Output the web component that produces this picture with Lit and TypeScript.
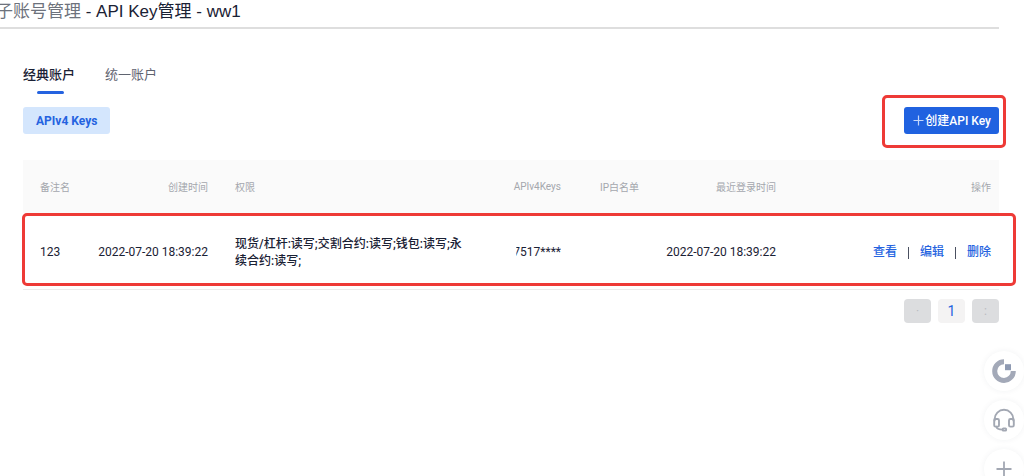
import { LitElement, html, css, svg } from "lit";
import { customElement, property } from "lit/decorators.js";

interface ApiKeyRow {
  name: string;
  created: string;
  permissions: string;
  key: string;
  ips: string;
  lastLogin: string;
}

@customElement("key-table")
class KeyTable extends LitElement {
  @property({ attribute: false }) rows: ApiKeyRow[] = [];

  static styles = css`
    :host { display: block; position: relative; }
    table { width: 100%; table-layout: fixed; border-collapse: collapse; }
    .c-name { width: 61px; }
    .c-created { width: 137px; }
    .c-key { width: 99px; }
    .c-ip { width: 78px; }
    .c-login { width: 137px; }
    .c-ops { width: 210px; }
    th, td { padding: 0 13px; text-align: right; white-space: nowrap; }
    th { height: 53px; background: #fafafa; color: #a4a7ad; font-size: 10px; font-weight: 400; }
    td { height: 73px; padding-top: 3px; font-size: 12px; line-height: 17px; color: #1a2134; border-bottom: 1px solid #ececec; }
    .name { text-align: left; padding-left: 17px; padding-right: 0; }
    .perm { text-align: left; white-space: normal; padding-left: 14px; }
    td.perm { font-weight: 500; }
    .ops { padding-left: 8px; padding-right: 8px; }
    .links { display: flex; justify-content: flex-end; align-items: center; gap: 11px; }
    a { color: #2563e0; text-decoration: none; font-weight: 500; }
    .bar { width: 1px; height: 12px; background: #4a5060; }
    .cut { display: inline-block; clip-path: inset(0 0 0 3px); }
    .frame { position: absolute; inset: 53px -17px 4px -1px; border: 3px solid #ee3a36; border-radius: 5px; pointer-events: none; }
  `;

  render() {
    return html`
      <table>
        <colgroup>
          <col class="c-name" /><col class="c-created" /><col /><col class="c-key" /><col class="c-ip" /><col class="c-login" /><col class="c-ops" />
        </colgroup>
        <thead>
          <tr>
            <th class="name">备注名</th><th>创建时间</th><th class="perm">权限</th><th>APIv4Keys</th><th>IP白名单</th><th>最近登录时间</th><th class="ops">操作</th>
          </tr>
        </thead>
        <tbody>
          ${this.rows.map((r) => html`
            <tr>
              <td class="name">${r.name}</td>
              <td>${r.created}</td>
              <td class="perm">${r.permissions}</td>
              <td><span class="cut">${r.key}</span></td>
              <td>${r.ips}</td>
              <td>${r.lastLogin}</td>
              <td class="ops">
                <div class="links">
                  <a href="#view">查看</a><span class="bar"></span><a href="#edit">编辑</a><span class="bar"></span><a href="#delete">删除</a>
                </div>
              </td>
            </tr>`)}
        </tbody>
      </table>
      <div class="frame"></div>
    `;
  }
}

const logoIcon = svg`
  <path d="M12 2.800A9.300 9.300 0 1 0 21.300 12" fill="none" stroke="#a3a9b8" stroke-width="5"/>
  <rect x="13" y="5.200" width="6" height="6" fill="#8e9ab2"/>`;

const headsetIcon = svg`
  <g fill="none" stroke="#a3a8b3" stroke-width="1.900" stroke-linecap="round" stroke-linejoin="round">
    <path d="M2.600 12.500V11.200a9.400 9.400 0 0 1 18.800 0V12.500"/>
    <rect x="2.200" y="11" width="4.800" height="7.600" rx="1.400"/>
    <rect x="17" y="11" width="4.800" height="7.600" rx="1.400"/>
    <path d="M4.400 18.600C4.800 21 7 21.600 10.500 21.600"/>
    <rect x="10.700" y="20.400" width="3.400" height="2.200" rx=".6"/>
  </g>`;

const plusIcon = svg`<path d="M12 4.500V19.500M4.500 12H19.500" fill="none" stroke="#a3a8b3" stroke-width="1.800"/>`;

@customElement("app-root")
class AppRoot extends LitElement {
  static styles = css`
    :host {
      display: block;
      min-height: 100vh;
      overflow: hidden;
      background: #fff;
      color: #1a2134;
      font-family: Roboto, "Noto Sans CJK SC", sans-serif;
    }
    * { box-sizing: border-box; }
    button { font: inherit; border: 0; padding: 0; cursor: pointer; }
    .page { padding-right: 25px; }
    h1 {
      margin: 0;
      height: 29px;
      margin-left: -4px;
      border-bottom: 2px solid #dedede;
      font: 400 17px/24px "Liberation Sans", "Noto Sans CJK SC", sans-serif;
      white-space: nowrap;
    }
    h1 a { color: #6d727c; text-decoration: none; }
    .content { padding-left: 23px; }
    .tabs { display: flex; gap: 30px; padding-top: 36px; }
    .tab { position: relative; height: 29px; background: none; font-size: 13px; line-height: 20px; padding-bottom: 9px; color: #5f6470; }
    .tab.on { color: #1a2134; font-weight: 500; }
    .tab.on::after { content: ""; position: absolute; left: 14px; right: 11px; bottom: 0; height: 3px; border-radius: 2px; background: #2563e0; }
    .tools { display: flex; justify-content: space-between; padding: 13px 0 26px; }
    .chip { height: 27px; padding: 0 13px; border-radius: 3px; background: #d4e6fd; color: #2563e0; font-size: 12px; font-weight: 700; }
    .create { position: relative; }
    .primary { display: flex; align-items: center; gap: 1px; height: 27px; padding: 0 8px 0 9px; border-radius: 3px; background: #2062e0; color: #fff; font-size: 12px; line-height: 16px; font-weight: 500; }
    .frame { position: absolute; inset: -12px -7px -14px -22px; border: 3px solid #ee3a36; border-radius: 5px; pointer-events: none; }
    .pager { display: flex; justify-content: flex-end; gap: 7px; padding-top: 9px; }
    .pager button { width: 27px; height: 24px; border-radius: 4px; background: #dcdddf; color: #b9bbbf; font-size: 12px; }
    .pager .current { background: #f4f3f3; color: #2563e0; font-size: 14px; }
    .dock { position: fixed; right: 0; top: 351px; display: grid; gap: 9px; }
    .dock button { display: grid; place-items: center; width: 40px; height: 40px; border-radius: 50%; background: #fff; box-shadow: 0 0 6px rgba(40, 50, 70, 0.06); }
  `;

  private rows: ApiKeyRow[] = [
    {
      name: "123",
      created: "2022-07-20 18:39:22",
      permissions: "现货/杠杆:读写;交割合约:读写;钱包:读写;永续合约:读写;",
      key: "7517****",
      ips: "",
      lastLogin: "2022-07-20 18:39:22",
    },
  ];

  render() {
    return html`
      <main class="page">
        <h1><a href="#accounts">子账号管理</a> - API Key管理 - ww1</h1>
        <section class="content">
          <nav class="tabs">
            <button class="tab on">经典账户</button>
            <button class="tab">统一账户</button>
          </nav>
          <div class="tools">
            <button class="chip">APIv4 Keys</button>
            <div class="create">
              <button class="primary">
                <svg width="11" height="11" viewBox="0 0 11 11"><path d="M5.500 0.500V10.500M0.500 5.500H10.500" stroke="#c4d7fb" stroke-width="1.200"/></svg>
                <span>创建API Key</span>
              </button>
              <div class="frame"></div>
            </div>
          </div>
          <key-table .rows=${this.rows}></key-table>
          <nav class="pager" aria-label="分页">
            <button>·</button><button class="current">1</button><button>:</button>
          </nav>
        </section>
      </main>
      <aside class="dock">
        <button aria-label="首页"><svg width="24" height="24" viewBox="0 0 24 24">${logoIcon}</svg></button>
        <button aria-label="客服"><svg width="24" height="24" viewBox="0 0 24 24">${headsetIcon}</svg></button>
        <button aria-label="更多"><svg width="24" height="24" viewBox="0 0 24 24">${plusIcon}</svg></button>
      </aside>
    `;
  }
}
